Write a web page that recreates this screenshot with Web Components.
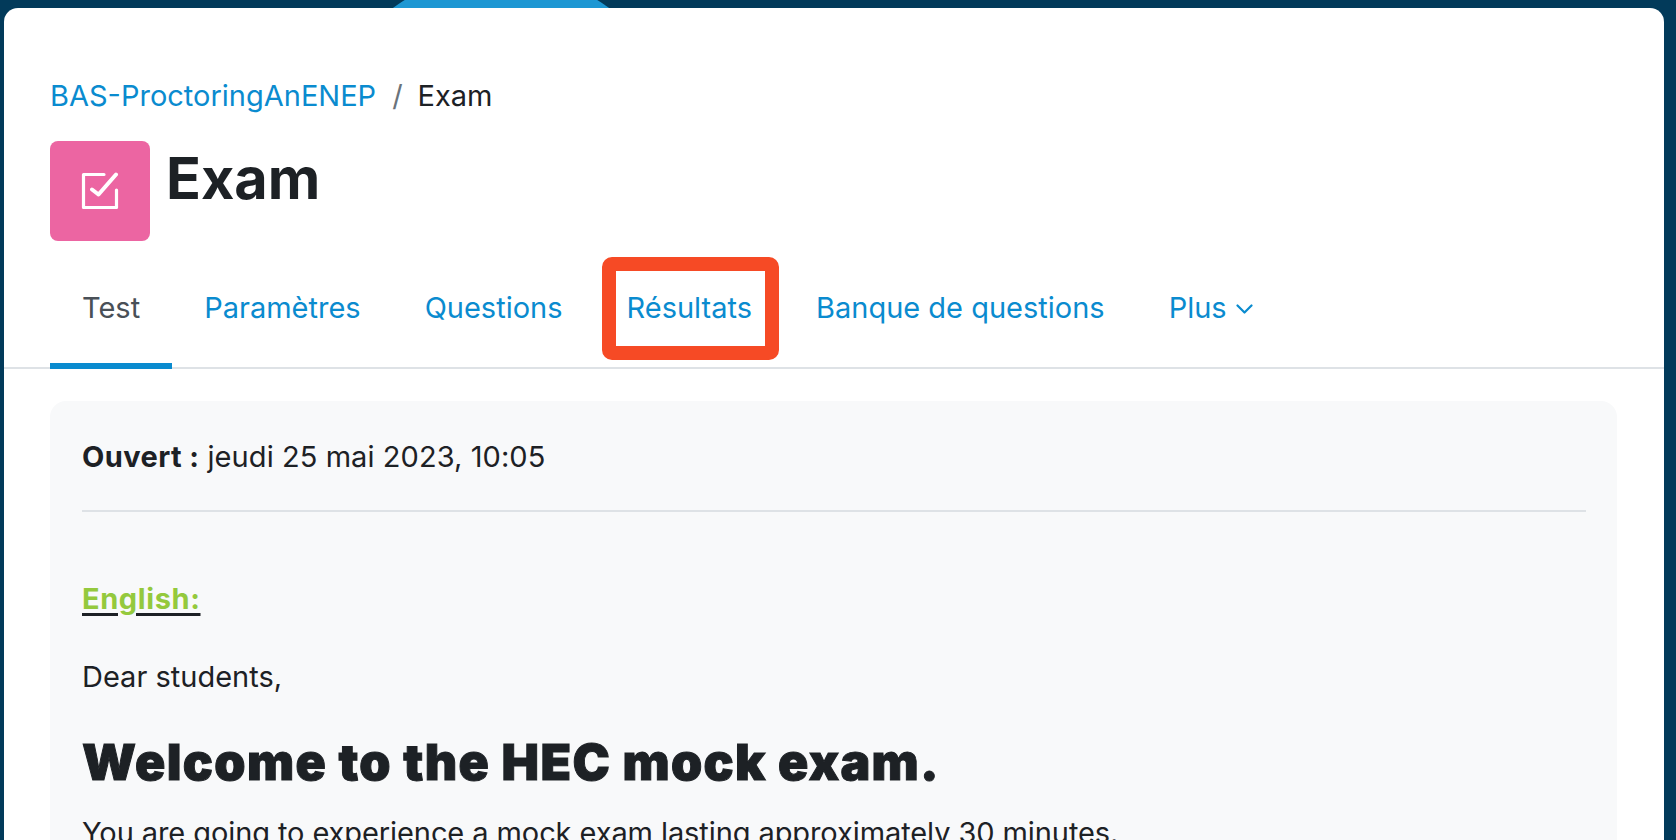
<!DOCTYPE html>
<html lang="fr">
<head>
<meta charset="utf-8">
<title>Exam</title>
<style>
  html, body { margin: 0; height: 100%; overflow: hidden; }
  body {
    background: #023a5a;
    font-family: Inter, "Liberation Sans", sans-serif;
    color: #1d2125;
  }
</style>
</head>
<body>
<course-page>
  <course-breadcrumb slot="top">
    <a slot="link">BAS-ProctoringAnENEP</a>
    <span>Exam</span>
  </course-breadcrumb>
  <activity-header slot="top">Exam</activity-header>
  <tab-bar slot="top">
    <tab-item active>Test</tab-item>
    <tab-item>Paramètres</tab-item>
    <tab-item>Questions</tab-item>
    <tab-item marked>Résultats</tab-item>
    <tab-item>Banque de questions</tab-item>
    <tab-item menu>Plus</tab-item>
  </tab-bar>
  <activity-panel>
    <span slot="dates"><b>Ouvert :</b> jeudi 25 mai 2023, 10:05</span>
    <p class="lang"><u><b>English:</b></u></p>
    <p>Dear students,</p>
    <h2>Welcome to the HEC mock exam.</h2>
    <p class="intro">You are going to experience a mock exam lasting approximately 30 minutes.</p>
  </activity-panel>
</course-page>

<script>
function makeTemplate(html) {
  const templateElement = document.createElement("template")
  templateElement.innerHTML = html
  return templateElement
}

class BaseElement extends HTMLElement {
  constructor() {
    super()
    const shadow = this.attachShadow({mode: "open"})
    shadow.appendChild(this.constructor.template.content.cloneNode(true))
  }
}

class CoursePage extends BaseElement {
  static template = makeTemplate(`
    <style>
      :host { display: block; position: relative; height: 100vh; padding: 8px 12px 0 4px; box-sizing: border-box; }
      .blob {
        position: absolute; left: 316px; top: -27px;
        width: 370px; height: 370px; border-radius: 50%;
        background: #1d97d3;
      }
      .card {
        position: relative; height: 100%; box-sizing: border-box;
        background: #fff; border-radius: 14px 14px 0 0;
        padding-top: 67px; overflow: hidden;
      }
      .body { padding: 0 47px 0 46px; }
    </style>
    <div class="blob"></div>
    <div class="card">
      <slot name="top"></slot>
      <div class="body"><slot></slot></div>
    </div>
  `)
}

class CourseBreadcrumb extends BaseElement {
  static template = makeTemplate(`
    <style>
      :host { display: flex; align-items: center; height: 42px; padding-left: 46px; font-size: 29px; line-height: 42px; }
      ::slotted(a) { color: #0a8bcf; }
      i { font-style: normal; color: #6a737b; margin: 0 15px 0 16px; }
    </style>
    <slot name="link"></slot><i>/</i><slot></slot>
  `)
}

class ActivityHeader extends BaseElement {
  static template = makeTemplate(`
    <style>
      :host { display: flex; align-items: flex-start; gap: 16px; padding: 24px 0 0 46px; }
      .icon {
        flex: none; width: 100px; height: 100px; border-radius: 8px;
        background: #ec65a2; display: flex; align-items: center; justify-content: center;
      }
      h1 { margin: 0; font-size: 57.600px; line-height: 70px; font-weight: 700; padding-top: 2px; }
    </style>
    <div class="icon">
      <svg width="38" height="38" viewBox="0 0 38 38" fill="none" stroke="#fff" stroke-width="3.200" stroke-linecap="round" stroke-linejoin="round">
        <path d="M23 2.500H2.500V35.500H35.500V18"/>
        <path stroke-width="4" d="M11 17.500L17.500 22.500L35 2.500"/>
      </svg>
    </div>
    <h1><slot></slot></h1>
  `)
}

class TabBar extends BaseElement {
  static template = makeTemplate(`
    <style>
      :host { display: flex; padding: 6px 0 0 46px; border-bottom: 2px solid #dee2e6; height: 120px; box-sizing: content-box; }
    </style>
    <slot></slot>
  `)
}

class TabItem extends BaseElement {
  static template = makeTemplate(`
    <style>
      :host {
        display: block; position: relative; height: 42px; margin-bottom: -2px;
        padding: 40px 32px; font-size: 29px; line-height: 42px; color: #0a8bcf;
        white-space: nowrap;
      }
      :host([active]) { color: #495057; }
      :host([active])::after {
        content: ""; position: absolute; left: 0; right: 0; bottom: 0; height: 6px; background: #0a8bcf;
      }
      :host([marked])::after {
        content: ""; position: absolute; left: 7px; right: 5px; top: 10px; bottom: 9px;
        border: 14px solid #f64a25; border-radius: 10px;
      }
      svg { display: none; margin-left: 9px; vertical-align: 4px; }
      :host([menu]) svg { display: inline-block; }
    </style>
    <slot></slot><svg width="17" height="10" viewBox="0 0 17 10" fill="none" stroke="currentColor" stroke-width="2.200" stroke-linecap="round" stroke-linejoin="round"><path d="M1.500 1.500L8.500 8.500L15.500 1.500"/></svg>
  `)
}

class ActivityPanel extends BaseElement {
  static template = makeTemplate(`
    <style>
      :host {
        display: block; margin-top: 32px; padding: 35px 31px 32px 32px; background: #f8f9fa;
        border-radius: 16px; font-size: 29px; line-height: 42px;
      }
      .dates { padding-bottom: 32px; border-bottom: 2px solid #dee2e6; margin-bottom: 66px; height: 42px; letter-spacing: 0.070px; }
      ::slotted(p) { margin: 0 0 36px; }
      ::slotted(.intro) { letter-spacing: -0.090px; }
      ::slotted(h2) {
        margin: -2px 0 20px; font-size: 50px; line-height: 60px; font-weight: 900;
        letter-spacing: 1.350px; -webkit-text-stroke: 1px #1d2125;
      }
    </style>
    <div class="dates"><slot name="dates"></slot></div>
    <slot></slot>
  `)
}

customElements.define("course-page", CoursePage)
customElements.define("course-breadcrumb", CourseBreadcrumb)
customElements.define("activity-header", ActivityHeader)
customElements.define("tab-bar", TabBar)
customElements.define("tab-item", TabItem)
customElements.define("activity-panel", ActivityPanel)
</script>
<style>
  activity-panel b { letter-spacing: 0.400px; }
  activity-panel u { text-decoration-thickness: 3px; text-underline-offset: 4px; }
  activity-panel .lang b { color: #94c93d; letter-spacing: 0.600px; }
</style>
</body>
</html>
